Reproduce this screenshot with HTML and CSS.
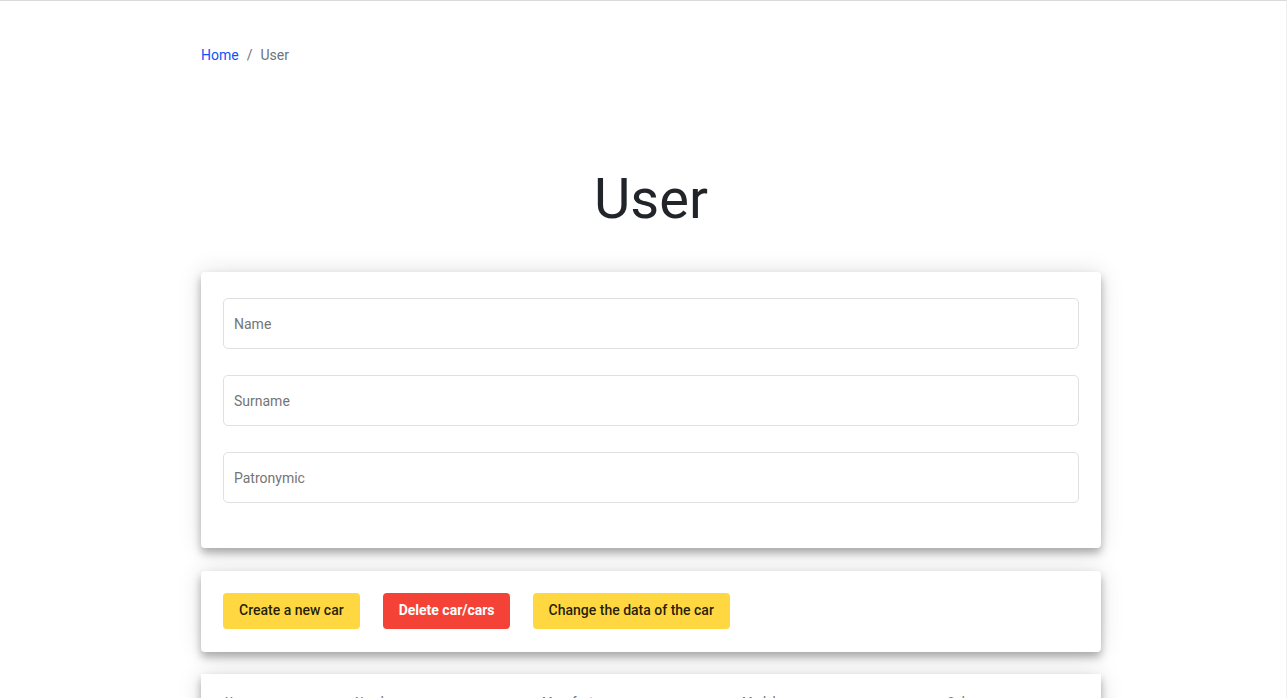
FILE: index.html
```html
<!DOCTYPE html>
<html lang="en">
<head>
<meta charset="utf-8">
<title>User</title>
<link rel="stylesheet" href="styles.css">
</head>
<body>
<main class="page">
  <nav class="breadcrumb" aria-label="Breadcrumb">
    <a class="breadcrumb-link" href="#">Home</a>
    <span>/</span>
    <span>User</span>
  </nav>
  <h1 class="title">User</h1>
  <form class="card user-form">
    <input class="field" type="text" placeholder="Name" aria-label="Name">
    <input class="field" type="text" placeholder="Surname" aria-label="Surname">
    <input class="field" type="text" placeholder="Patronymic" aria-label="Patronymic">
  </form>
  <section class="card actions">
    <button class="button accent" type="button">Create a new car</button>
    <button class="button warn" type="button">Delete car/cars</button>
    <button class="button accent" type="button">Change the data of the car</button>
  </section>
  <table class="card cars">
    <colgroup><col class="col-id"><col class="col-number"><col class="col-maker"><col class="col-model"><col></colgroup>
    <thead>
      <tr><th>User</th><th>Number</th><th>Manufacturer</th><th>Model</th><th>Color</th></tr>
    </thead>
  </table>
</main>
</body>
</html>
```
FILE: styles.css
```css
* {
  box-sizing: border-box;
}

html {
  height: 100%;
  overflow: hidden;
}

body {
  height: 100%;
  margin: 0;
  overflow: hidden;
  border-top: 1px solid #d9d9dc;
  border-right: 1px solid #f0f0f0;
  background: #fff;
  color: #212529;
  font-family: Roboto, "Liberation Sans", sans-serif;
  font-size: 14px;
  line-height: 20px;
}

.page {
  display: flex;
  flex-direction: column;
  max-width: 916px;
  margin: 0 auto;
  padding-left: 16px;
}

.breadcrumb {
  display: flex;
  gap: 8px;
  padding-top: 44px;
  color: #6c757d;
}

.breadcrumb-link {
  color: #0d52fd;
  text-decoration: none;
}

.title {
  margin: 101px 0 39px;
  font-size: 56px;
  font-weight: 400;
  line-height: 67px;
  text-align: center;
}

.card {
  border-radius: 4px;
  background: #fff;
  box-shadow: 0 5px 8px rgba(0, 0, 0, 0.3), 0 0 24px rgba(0, 0, 0, 0.12);
}

.user-form {
  display: flex;
  flex-direction: column;
  gap: 26px;
  padding: 26px 22px 45px;
}

.field {
  width: 100%;
  height: 51px;
  padding: 0 10px;
  border: 1px solid #e0e0e0;
  border-radius: 5px;
  background: #fff;
  color: #212529;
  font: inherit;
}

.field::placeholder {
  color: #757575;
  opacity: 1;
}

.actions {
  display: flex;
  gap: 23px;
  margin-top: 23px;
  padding: 22px 22px 23px;
}

.button {
  padding: 0 16px 2px;
  border: 0;
  border-radius: 4px;
  font: inherit;
  font-weight: 500;
  line-height: 34px;
}

.accent {
  background: #ffd740;
  color: rgba(0, 0, 0, 0.87);
}

.warn {
  padding-right: 15px;
  background: #f44336;
  color: #fff;
  font-weight: 700;
}

.cars {
  width: 100%;
  margin-top: 22px;
  border-radius: 0;
  border-spacing: 0;
  table-layout: fixed;
}

.cars th {
  height: 56px;
  padding: 0;
  color: rgba(0, 0, 0, 0.54);
  font-size: 12px;
  font-weight: 500;
  text-align: left;
}

.cars th:first-child {
  padding-left: 24px;
}

.col-id {
  width: 154px;
}

.col-number {
  width: 187px;
}

.col-maker {
  width: 200px;
}

.col-model {
  width: 205px;
}
```
